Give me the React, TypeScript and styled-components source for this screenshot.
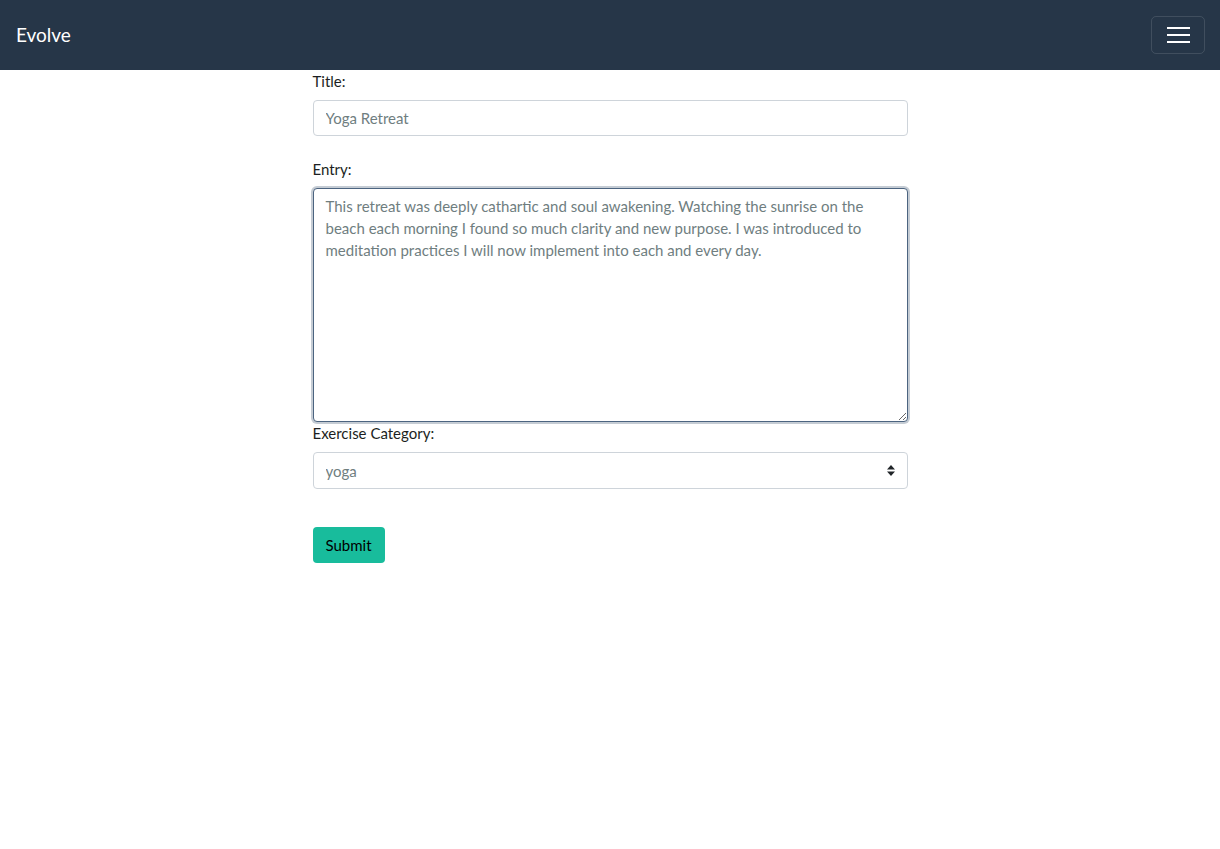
import React, { useState } from 'react';
import styled, { createGlobalStyle } from 'styled-components';

const GlobalStyle = createGlobalStyle`
  * {
    box-sizing: border-box;
  }
  body {
    margin: 0;
    background: #ffffff;
    font-family: Lato, 'Liberation Sans', sans-serif;
    font-size: 15px;
    color: #212529;
  }
`;

const Navbar = styled.nav`
  height: 70px;
  background-color: #263648;
  display: flex;
  align-items: center;
  justify-content: space-between;
  padding: 0 15px 0 16px;
`;

const Brand = styled.a`
  color: #ffffff;
  font-size: 19px;
  line-height: 1;
  text-decoration: none;
  padding-bottom: 1px;
`;

const Toggler = styled.button`
  width: 54px;
  height: 38px;
  background: transparent;
  border: 1px solid rgba(255, 255, 255, 0.12);
  border-radius: 5px;
  display: flex;
  flex-direction: column;
  align-items: center;
  justify-content: center;
  gap: 5px;
  padding: 0;
  cursor: pointer;
`;

const TogglerBar = styled.span`
  display: block;
  width: 23px;
  height: 2px;
  background: #ffffff;
`;

const Form = styled.form`
  width: 595px;
  margin: 0 auto;
  display: flex;
  flex-direction: column;
`;

const Label = styled.label`
  display: block;
  font-size: 15px;
  line-height: 22px;
  color: #1c1f22;
  margin-bottom: 8px;
`;

const Group = styled.div<{ $gap: number }>`
  margin-bottom: ${(p) => p.$gap}px;
`;

const Input = styled.input`
  width: 100%;
  height: 36px;
  padding: 0 12px;
  border: 1px solid #ced4da;
  border-radius: 4px;
  font-family: Lato, 'Liberation Sans', sans-serif;
  font-size: 15px;
  color: #6f7e7f;
  outline: none;
`;

const TextArea = styled.textarea`
  display: block;
  width: 100%;
  height: 234px;
  padding: 6px 12px;
  border: 1px solid #4c6480;
  border-radius: 4px;
  box-shadow: 0 0 0 2px #c5ccd4;
  font-family: Lato, 'Liberation Sans', sans-serif;
  font-size: 15px;
  line-height: 22px;
  color: #6f7e7f;
  caret-color: #212529;
  resize: vertical;
  outline: none;
`;

const SelectWrap = styled.div`
  position: relative;
  width: 100%;
`;

const Select = styled.select`
  width: 100%;
  height: 37px;
  padding: 0 12px;
  border: 1px solid #ced4da;
  border-radius: 4px;
  background: #ffffff;
  font-family: Lato, 'Liberation Sans', sans-serif;
  font-size: 15px;
  color: #6f7e7f;
  appearance: none;
  outline: none;
`;

const SelectArrows = styled.svg`
  position: absolute;
  right: 13px;
  top: 13px;
  pointer-events: none;
`;

const SubmitButton = styled.button`
  align-self: flex-start;
  height: 36px;
  padding: 0 13px;
  background: #18bc9c;
  border: none;
  border-radius: 4px;
  font-family: Lato, 'Liberation Sans', sans-serif;
  font-size: 15px;
  color: #000000;
  cursor: pointer;
`;

export default function App() {
  const [title, setTitle] = useState('Yoga Retreat');
  const [entry, setEntry] = useState(
    'This retreat was deeply cathartic and soul awakening. Watching the sunrise on the beach each morning I found so much clarity and new purpose. I was introduced to meditation practices I will now implement into each and every day.'
  );
  const [category, setCategory] = useState('yoga');

  return (
    <>
      <GlobalStyle />
      <Navbar>
        <Brand href="#">Evolve</Brand>
        <Toggler type="button" aria-label="Toggle navigation">
          <TogglerBar />
          <TogglerBar />
          <TogglerBar />
        </Toggler>
      </Navbar>
      <Form onSubmit={(e) => e.preventDefault()}>
        <Group $gap={22}>
          <Label htmlFor="title">Title:</Label>
          <Input id="title" value={title} onChange={(e) => setTitle(e.target.value)} />
        </Group>
        <Group $gap={0}>
          <Label htmlFor="entry">Entry:</Label>
          <TextArea id="entry" value={entry} onChange={(e) => setEntry(e.target.value)} />
        </Group>
        <Group $gap={38}>
          <Label htmlFor="category">Exercise Category:</Label>
          <SelectWrap>
            <Select id="category" value={category} onChange={(e) => setCategory(e.target.value)}>
              <option value="yoga">yoga</option>
              <option value="running">running</option>
              <option value="cycling">cycling</option>
              <option value="strength">strength</option>
            </Select>
            <SelectArrows width="8" height="11" viewBox="0 0 8 11">
              <path d="M4 0 L8 4.5 H0 Z M4 11 L0 6.5 H8 Z" fill="#212529" />
            </SelectArrows>
          </SelectWrap>
        </Group>
        <SubmitButton type="submit">Submit</SubmitButton>
      </Form>
    </>
  );
}
